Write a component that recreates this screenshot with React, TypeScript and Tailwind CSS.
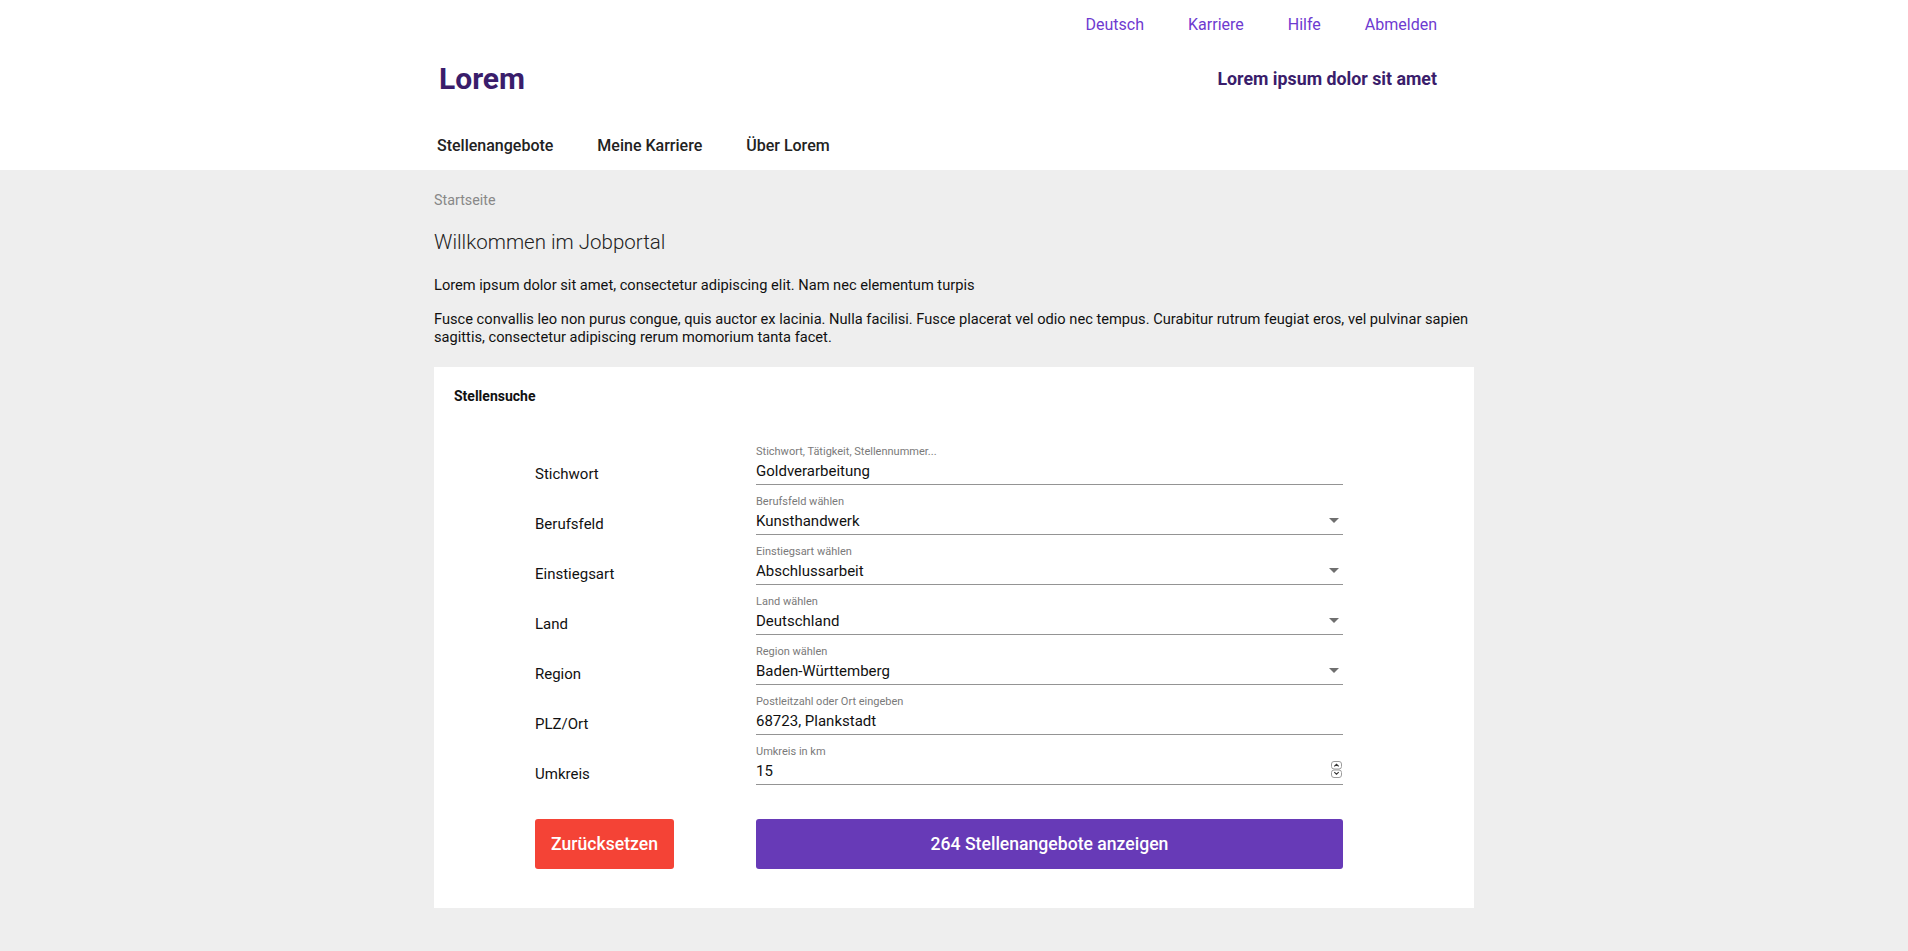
import React from "react";

const topLinks = ["Deutsch", "Karriere", "Hilfe", "Abmelden"];
const navItems = ["Stellenangebote", "Meine Karriere", "Über Lorem"];

type FieldDef = {
  label: string;
  hint: string;
  value: string;
  kind: "text" | "select" | "number";
};

const fields: FieldDef[] = [
  { label: "Stichwort", hint: "Stichwort, Tätigkeit, Stellennummer...", value: "Goldverarbeitung", kind: "text" },
  { label: "Berufsfeld", hint: "Berufsfeld wählen", value: "Kunsthandwerk", kind: "select" },
  { label: "Einstiegsart", hint: "Einstiegsart wählen", value: "Abschlussarbeit", kind: "select" },
  { label: "Land", hint: "Land wählen", value: "Deutschland", kind: "select" },
  { label: "Region", hint: "Region wählen", value: "Baden-Württemberg", kind: "select" },
  { label: "PLZ/Ort", hint: "Postleitzahl oder Ort eingeben", value: "68723, Plankstadt", kind: "text" },
  { label: "Umkreis", hint: "Umkreis in km", value: "15", kind: "number" },
];

function SelectArrow() {
  return (
    <svg width="10" height="5" viewBox="0 0 10 5" className="mr-[4px] -translate-y-[1px] shrink-0">
      <path d="M0 0h10L5 5z" fill="#6f6f6f" />
    </svg>
  );
}

// kleiner Zahlen-Spinner wie im Browser
function Spinner() {
  return (
    <svg width="11" height="17" viewBox="0 0 11 17" className="mr-[1px] mt-[1px] shrink-0 self-start">
      <rect x="0.5" y="0.5" width="10" height="7.5" rx="2.5" fill="#fff" stroke="#9c9c9c" />
      <rect x="0.5" y="9" width="10" height="7.5" rx="2.5" fill="#fff" stroke="#9c9c9c" />
      <path d="M3.3 5.3l2.2-2 2.2 2" fill="none" stroke="#333" strokeWidth="1.1" />
      <path d="M3.3 11.2l2.2 2 2.2-2" fill="none" stroke="#333" strokeWidth="1.1" />
    </svg>
  );
}

function FormRow({ field }: { field: FieldDef }) {
  return (
    <div className="flex items-end">
      <div className="w-[221px] shrink-0 text-[15px] leading-[22px] text-[#111]">{field.label}</div>
      <div className="flex h-[50px] flex-1 flex-col justify-end border-b border-[#949494]">
        <div className="mb-[2px] text-[11px] leading-[13px] text-[#7a7a7a]">{field.hint}</div>
        <div className="flex items-center justify-between pb-[2px] text-[15px] leading-[22px] text-[#111]">
          <span>{field.value}</span>
          {field.kind === "select" && <SelectArrow />}
          {field.kind === "number" && <Spinner />}
        </div>
      </div>
    </div>
  );
}

export default function App() {
  return (
    <div className="min-h-screen bg-[#eeeeee] font-['Roboto',sans-serif]">
      <header className="bg-white">
        <div className="mx-auto w-[1040px] pb-[12px] pt-[13px]">
          <div className="flex justify-end gap-[44px] pr-[37px] text-base leading-6 text-[#6e3ad0]">
            {topLinks.map((l) => (
              <a key={l} href="#">
                {l}
              </a>
            ))}
          </div>
          <div className="mt-6 flex items-center justify-between pl-[5px] pr-[37px]">
            <div className="text-[30px] font-bold leading-[36px] text-[#3a1d6b]">Lorem</div>
            <div className="text-[17.8px] font-bold leading-6 text-[#3a1d6b]">Lorem ipsum dolor sit amet</div>
          </div>
          <nav className="mt-[37px] flex gap-[44px] pl-[3px] text-base font-medium leading-6 text-[#222]">
            {navItems.map((n) => (
              <a key={n} href="#">
                {n}
              </a>
            ))}
          </nav>
        </div>
      </header>

      <main className="mx-auto w-[1040px] pt-5 pb-[45px]">
        <div className="text-[14.3px] leading-5 text-[#888]">Startseite</div>
        <h1 className="mt-[18px] text-[20.5px] font-light leading-[28px] text-[#222]">Willkommen im Jobportal</h1>
        <p className="mt-5 text-[14.65px] leading-[18px] text-[#111]">
          Lorem ipsum dolor sit amet, consectetur adipiscing elit. Nam nec elementum turpis
        </p>
        <p className="mt-4 text-[14.65px] leading-[18px] text-[#111]">
          Fusce convallis leo non purus congue, quis auctor ex lacinia. Nulla facilisi. Fusce placerat vel odio nec
          tempus. Curabitur rutrum feugiat eros, vel pulvinar sapien sagittis, consectetur adipiscing rerum momorium
          tanta facet.
        </p>

        <section className="mt-[21px] bg-white px-5 pb-[39px] pt-5">
          <h2 className="text-sm font-bold leading-[18px] text-[#111]">Stellensuche</h2>
          <div className="ml-[81px] mt-[30px] w-[808px]">
            {fields.map((f) => (
              <FormRow key={f.label} field={f} />
            ))}
            <div className="mt-[34px] flex">
              <button className="h-[50px] w-[139px] rounded-[3px] bg-[#f44336] text-[17.6px] font-medium text-white">
                Zurücksetzen
              </button>
              <button className="ml-[82px] h-[50px] flex-1 rounded-[3px] bg-[#673ab7] text-[17.6px] font-medium text-white">
                264 Stellenangebote anzeigen
              </button>
            </div>
          </div>
        </section>
      </main>
    </div>
  );
}
